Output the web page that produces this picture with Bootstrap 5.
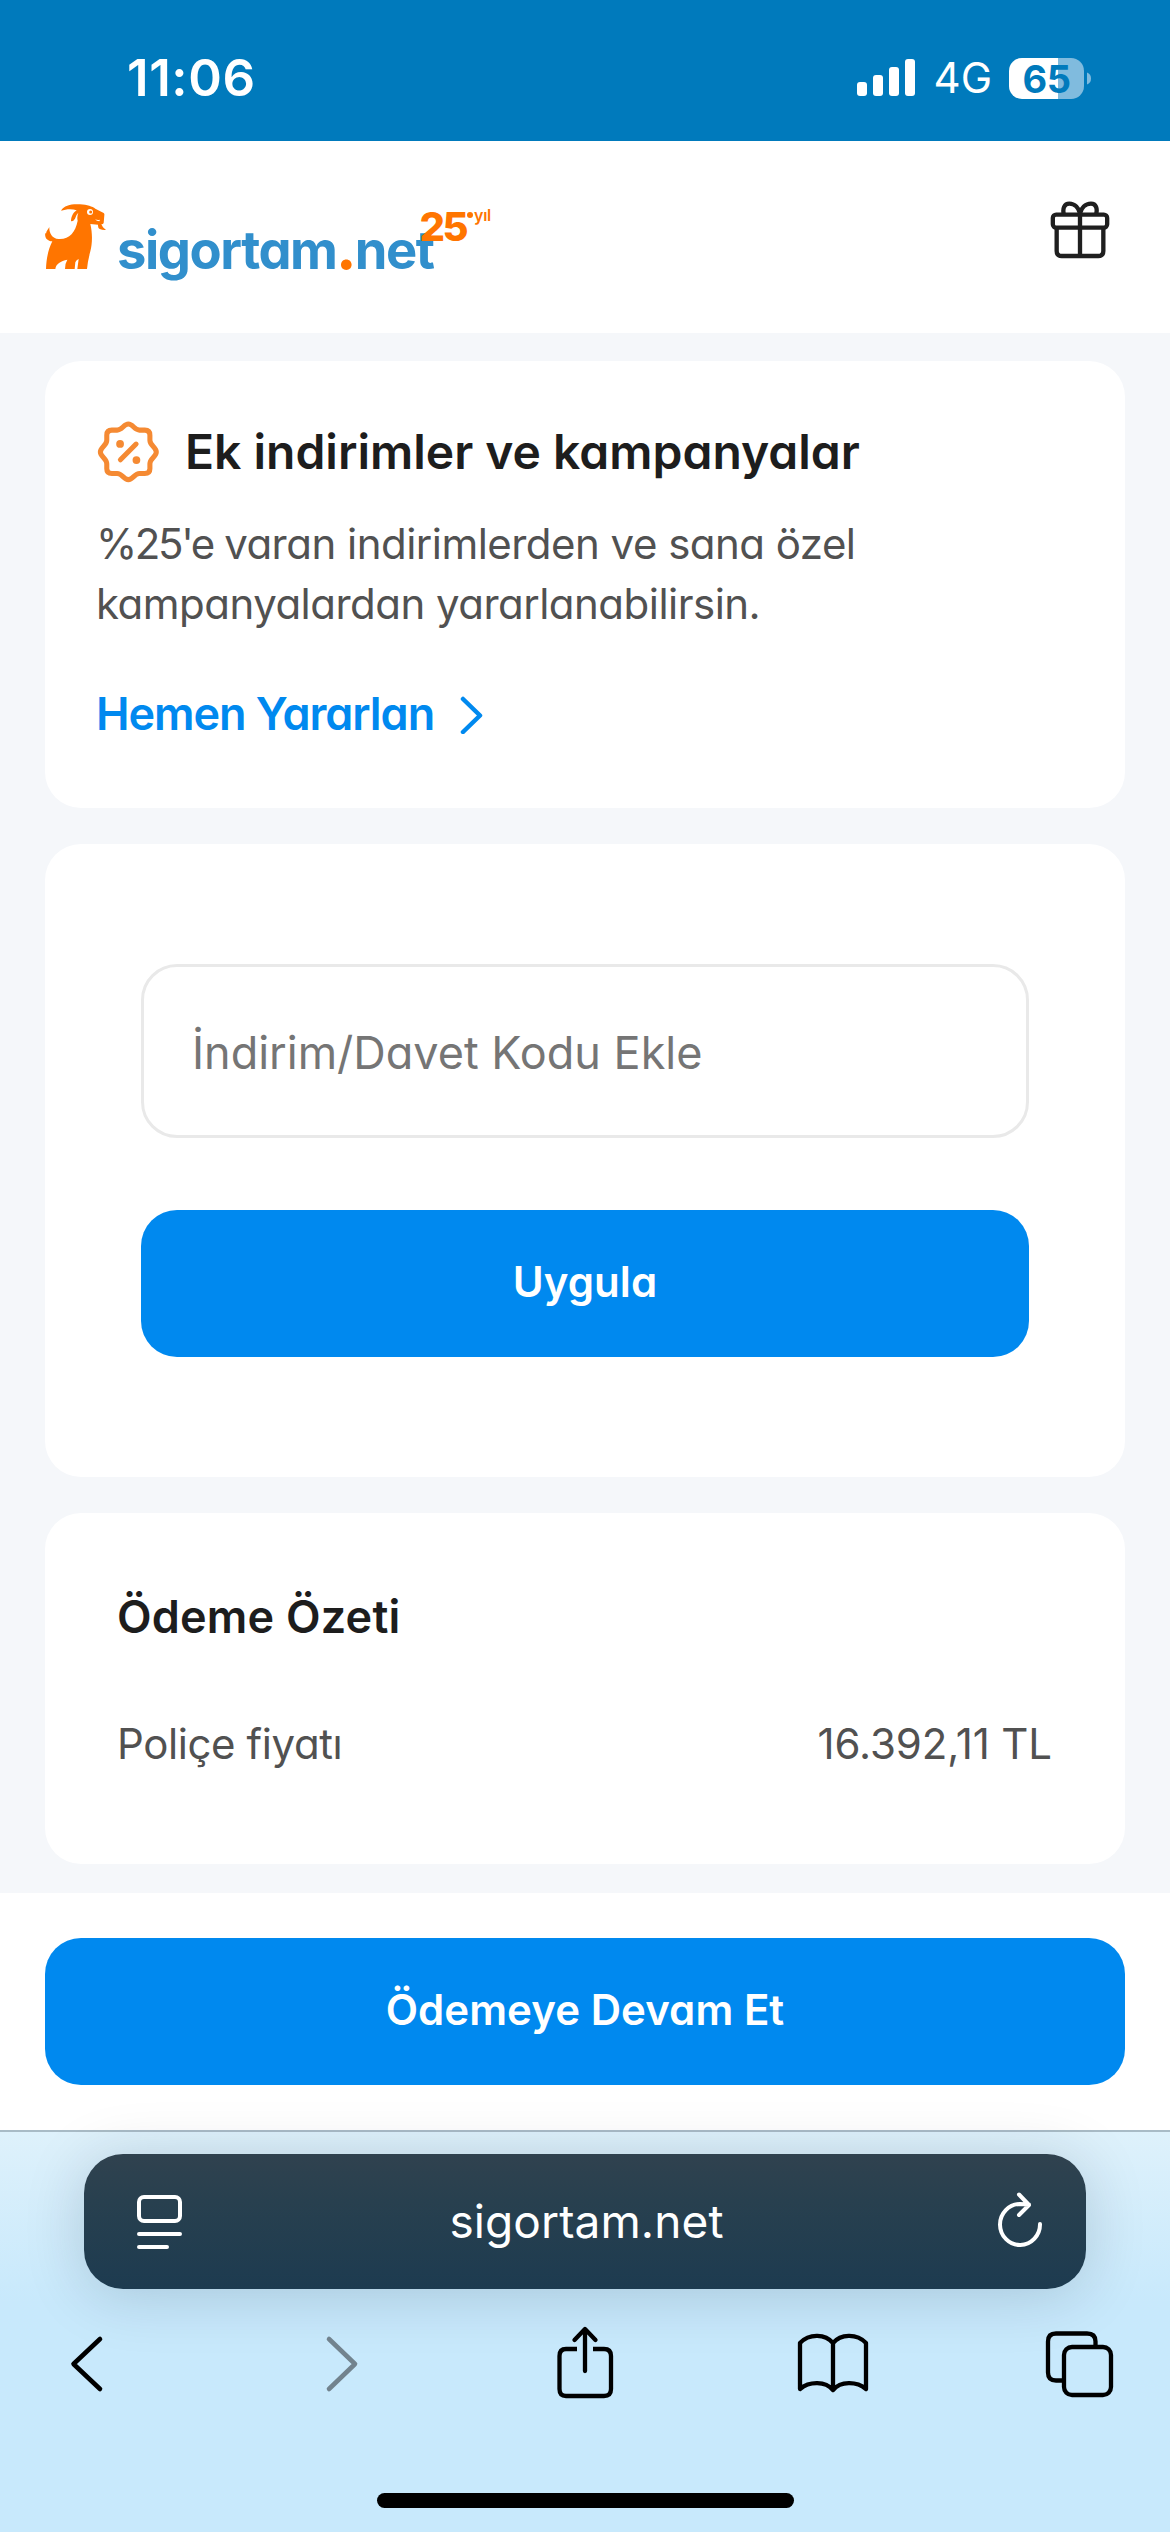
<!DOCTYPE html>
<html lang="tr">
<head>
<meta charset="utf-8">
<meta name="viewport" content="width=device-width, initial-scale=1">
<title>sigortam.net</title>
<link href="https://cdn.jsdelivr.net/npm/bootstrap@5.3.0/dist/css/bootstrap.min.css" rel="stylesheet">
<style>
body{width:1170px;height:2532px;overflow:hidden;background:#f5f7fa;font-family:Inter,"Liberation Sans",sans-serif;color:#1d1d1d}
svg{display:block;flex:none}
.status{height:141px;background:#007abc;color:#fff;padding:15px 79px 0 127px}
.clock{font-size:51px;font-weight:600;letter-spacing:.6px;line-height:60px}
.netw{font-size:42px;line-height:60px;margin:0 17px 0 18px}
.batt{width:75px;height:41px;border-radius:13px;background:linear-gradient(90deg,#fff 49px,#80bbde 49px);color:#007abc;font-size:38px;font-weight:700;line-height:42px;letter-spacing:-.5px;text-align:center}
.site,.site input,.site button{font-feature-settings:"cv11"}
.topbar{height:192px;background:#fff;padding:59px 60px 0 45px}
.wordmark{font-size:52.5px;font-weight:700;line-height:40px;letter-spacing:-1.45px;color:#318fcc;margin:30px 0 0 9px}
.wordmark b{color:#ff7500}
.years{font-size:40px;font-weight:800;line-height:29px;letter-spacing:-2.5px;color:#ff7500;margin:12px 0 0 -14px}
.bullet{width:6px;height:6px;border-radius:50%;background:#ff7500;margin:12px 1px 0 1px}
.yil{font-size:16px;font-weight:600;line-height:16px;color:#ff7500;letter-spacing:-.3px;margin-top:7px}
.main-area{padding:28px 45px 29px;gap:36px}
.box{background:#fff;border:0;border-radius:36px;--bs-card-border-radius:36px}
.promo{height:447px;padding:60px 51px 0 52px}
.promo h1{font-size:48px;font-weight:600;line-height:60px;margin:0 0 0 26px;letter-spacing:0}
.promo p{font-size:42px;line-height:60px;color:#515151;margin:31px 0 50px -1px;letter-spacing:-.52px}
.pct{letter-spacing:-2.4px}
.more{font-size:45px;font-weight:600;line-height:60px;color:#0089ef;text-decoration:none;gap:26px;letter-spacing:-1.05px;margin-left:-1px}
.coupon{height:633px;padding:120px 96px;gap:72px}
.code{height:174px;border:3px solid #e9e9e9;border-radius:36px;font-size:45px;padding:3px 46px 0 48px;background:#fff}
.code::placeholder{color:#757575;opacity:1}
.cta{height:147px;border:0;border-radius:36px;background:#0089ef;color:#fff;font-size:42px;font-weight:600;line-height:60px;padding:0 0 3px;letter-spacing:.05px}
.summary{height:351px;padding:74px 73px 0 72px}
.summary h2{font-size:45px;font-weight:600;line-height:60px;margin:0 0 67px;letter-spacing:.2px}
.price{font-size:42px;line-height:60px;color:#515151;letter-spacing:-.4px}
.amount{letter-spacing:-.1px}
.paybar{height:237px;background:#fff;padding:45px 45px 0}
.safari{height:402px;border-top:2px solid #a9bbc6;background:linear-gradient(#def1fb,#c8e9fc 170px)}
.urlbar{height:135px;margin:22px 84px 0;border-radius:39px;background:linear-gradient(#30424f,#28404f 35%,#1d3b50);color:#fff;box-shadow:0 6px 60px rgba(0,30,50,.17);padding:0 41px 0 51px;font-size:46px;letter-spacing:.1px}
.urlbar span{margin-left:-7px}
.tools{padding:35px 50px 0 46px}
.home{width:417px;height:15px;border-radius:8px;background:#000;margin:89px auto 0}
</style>
<script src="https://cdn.jsdelivr.net/npm/bootstrap@5.3.0/dist/js/bootstrap.bundle.min.js"></script>
</head>
<body>
<div class="status d-flex align-items-center justify-content-between">
  <span class="clock">11:06</span>
  <div class="d-flex align-items-center">
    <svg width="60" height="38" viewBox="0 0 60 38" fill="#fff"><rect x="1" y="23" width="10" height="14" rx="3"/><rect x="17" y="16" width="10" height="21" rx="3"/><rect x="33" y="8" width="10" height="29" rx="3"/><rect x="49" y="0" width="10" height="37" rx="3"/></svg>
    <span class="netw">4G</span>
    <div class="batt">65</div>
    <svg width="7" height="41" viewBox="0 0 7 41"><path d="M3 14.500q4 1.500 4 6t-4 6z" fill="#80bbde"/></svg>
  </div>
</div>

<div class="site">
<header class="topbar d-flex justify-content-between align-items-start">
  <div class="d-flex align-items-start">
    <svg width="63" height="80" viewBox="45 60 189 240">
      <path fill="#ff7500" d="M93 92C102 75 128 71 150 73C172 74 187 80 196 86L221 99Q224 101 223 106L221 129Q220 133 214 133L219 142L228 150Q218 151 209 147Q203 144 204 134L181 132C188 160 187 192 181 214Q173 244 171 267H142L146 237Q139 240 136 247L134 267H105Q105 250 112 239C92 243 78 251 76 267H48C49 235 55 208 67 184C51 182 43 173 46 158L48 161C49 153 54 148 58 141C57 157 65 175 86 177C117 179 136 158 143 122Q140 111 145 98Q138 104 135 116Q131 124 123 124C123 111 129 98 140 91C124 85 107 88 93 92Z"/>
      <circle cx="180" cy="96" r="9" fill="#fff"/><circle cx="182" cy="96" r="4.500" fill="#ff7500"/><path d="M195 118q8 3 15 1l-2 5q-8 0-13-6" fill="#fff"/>
    </svg>
    <span class="wordmark">sigortam<b>.</b>net</span>
    <span class="years">25</span>
    <i class="bullet"></i>
    <span class="yil">yıl</span>
  </div>
  <svg width="60" height="60" viewBox="150 90 180 180" fill="none" stroke="#1f1f1f" stroke-width="13"><rect x="158.500" y="134" width="163" height="39" rx="10"/><path d="M170 176v67q0 15 15 15h110q15 0 15-15v-67M240 130v128M240 130C236 115 225 101 208 101C192 101 188 116 191 131M240 130C244 115 255 101 273 101C289 101 292 116 289 131"/></svg>
</header>

<main class="main-area d-flex flex-column">
  <section class="card box promo">
    <div class="d-flex align-items-center">
      <svg width="62" height="62" viewBox="54 61 184 184" fill="none" stroke="#f58a33" stroke-width="15" stroke-linejoin="round" stroke-linecap="round"><path d="M147 70C161 70 165 88 180 88H196Q211 88 211 103V118C211 134 230 139 230 153C230 167 211 172 211 188V203Q211 217 196 217H180C165 217 161 235 147 235C133 235 129 217 114 217H98Q83 217 83 203V188C83 172 64 167 64 153C64 139 83 134 83 118V103Q83 88 98 88H114C129 88 133 70 147 70Z"/><path d="M123.500 176L170 129.500"/><circle cx="122.500" cy="129" r="11.500" fill="#f58a33" stroke="none"/><circle cx="171" cy="177" r="11.500" fill="#f58a33" stroke="none"/></svg>
      <h1>Ek indirimler ve kampanyalar</h1>
    </div>
    <p><span class="pct">%25'e</span> varan indirimlerden ve sana özel<br>kampanyalardan yararlanabilirsin.</p>
    <a href="#" class="more d-flex align-items-center"><span>Hemen Yararlan</span>
      <svg width="24" height="40" viewBox="0 0 24 40" fill="none" stroke="#0089ef" stroke-width="4.500" stroke-linecap="round" stroke-linejoin="round"><path d="M3 5l17 16.500L3 38"/></svg></a>
  </section>
  <section class="card box coupon">
    <input class="code w-100" type="text" placeholder="İndirim/Davet Kodu Ekle" aria-label="İndirim/Davet Kodu Ekle">
    <button class="btn cta w-100">Uygula</button>
  </section>
  <section class="card box summary">
    <h2>Ödeme Özeti</h2>
    <div class="price d-flex justify-content-between"><span>Poliçe fiyatı</span><span class="amount">16.392,11 TL</span></div>
  </section>
</main>
<div class="paybar"><button class="btn cta w-100">Ödemeye Devam Et</button></div>
</div>

<div class="safari d-flex flex-column">
  <div class="urlbar d-flex align-items-center justify-content-between">
    <svg width="50" height="60" viewBox="135 2192 50 60" fill="none" stroke="#fff" stroke-width="4" stroke-linecap="round"><rect x="139" y="2197" width="41" height="24" rx="5"/><path d="M139 2234h41M139 2247h28"/></svg>
    <span>sigortam.net</span>
    <svg width="50" height="60" viewBox="995 2192 50 60" fill="none" stroke="#fff" stroke-width="4" stroke-linecap="round" stroke-linejoin="round"><path d="M1040 2224A20 20.500 0 1 1 1020 2204L1029 2204.500M1019 2194.500L1029 2205L1019 2215"/></svg>
  </div>
  <div class="tools d-flex justify-content-between">
    <svg width="80" height="80" viewBox="46 2324 80 80" fill="none" stroke="#000" stroke-width="4.600" stroke-linecap="round" stroke-linejoin="round"><path d="M100 2339L73.500 2364L100 2389"/></svg>
    <svg width="80" height="80" viewBox="294.500 2324 80 80" fill="none" stroke="#72838e" stroke-width="4.600" stroke-linecap="round" stroke-linejoin="round"><path d="M328.500 2339L354.500 2364L328.500 2389"/></svg>
    <svg width="80" height="80" viewBox="543 2324 80 80" fill="none" stroke="#000" stroke-width="4.300" stroke-linejoin="round"><path d="M577 2349H566Q559.500 2349 559.500 2356V2389Q559.500 2396 566 2396H604Q611 2396 611 2389V2356Q611 2349 604 2349H593"/><path stroke-linecap="round" d="M585 2371V2330M574.500 2340L585 2329L595.500 2340"/></svg>
    <svg width="80" height="80" viewBox="791.500 2324 80 80" fill="none" stroke="#000" stroke-width="4.300" stroke-linejoin="round"><path d="M832.500 2343C825 2334 809 2333 799.500 2343V2389C809 2381 825 2381 832.500 2390C840 2381 856 2381 865.500 2389V2343C856 2333 840 2334 832.500 2343V2390"/></svg>
    <svg width="80" height="80" viewBox="1040 2324 80 80" fill="none" stroke="#000" stroke-width="4.300"><rect x="1064" y="2347" width="47" height="48" rx="8"/><path d="M1062 2380.500H1056Q1048 2380.500 1048 2372.500V2341.500Q1048 2333.500 1056 2333.500H1087Q1095.500 2333.500 1095.500 2341.500V2345"/></svg>
  </div>
  <div class="home"></div>
</div>
</body>
</html>
